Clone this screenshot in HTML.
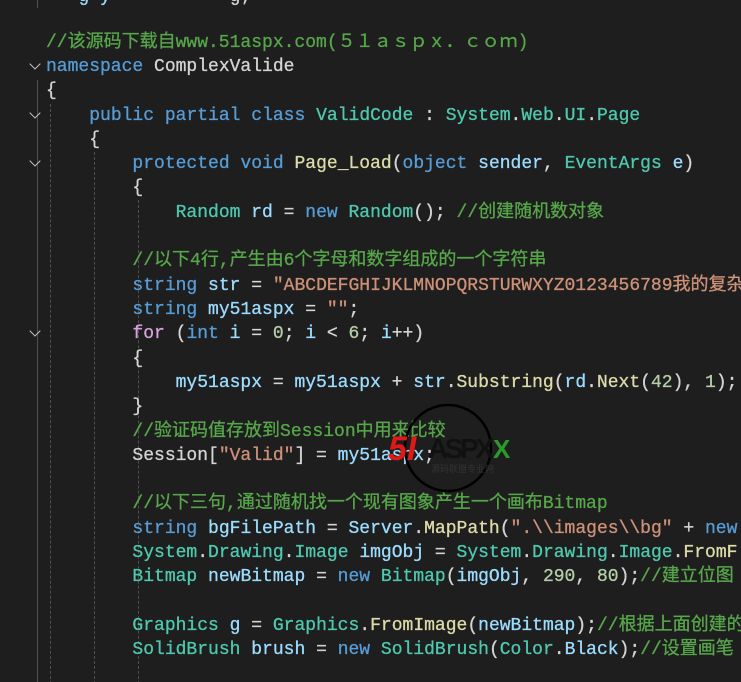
<!DOCTYPE html>
<html><head><meta charset="utf-8"><style>
html,body{margin:0;padding:0;background:#1e1e1e;width:741px;height:682px;overflow:hidden}
.ed{position:relative;width:741px;height:682px;overflow:hidden;font-family:"Liberation Mono","Noto Sans CJK SC",monospace;font-size:18px;color:#d4d4d4}
.l{position:absolute;left:46px;height:24px;line-height:24px;white-space:pre;-webkit-text-stroke:0.3px currentColor}
.k{color:#569cd6}.t{color:#4ec9b0}.m{color:#dcdcaa}.v{color:#9cdcfe}.s{color:#ce9178}.c{color:#57a64a}.n{color:#b5cea8}.p{color:#d8a0df}
.f{position:absolute;left:31px;width:7px;height:7px;border-right:1.5px solid #c5c5c5;border-bottom:1.5px solid #c5c5c5;transform:rotate(45deg)}
.g{position:absolute;width:0;border-left:1px dashed #505050}
.gs{position:absolute;width:0;border-left:1px solid #505050}
</style></head><body><div class="ed">
<div class="l" style="top:-15px;left:46px"><span class="v">   g y</span>           <span>g;</span></div>
<div class="gs" style="left:37px;top:0;height:8px"></div>
<div class="l c" style="top:31px">//该源码下载自www.51aspx.com(５１ａｓｐｘ．ｃｏｍ)</div>
<div class="f" style="top:60px"></div>
<div class="l" style="top:55px"><span class="k">namespace</span> ComplexValide</div>
<div class="l" style="top:79px">{</div>
<div class="gs" style="left:37px;top:80px;height:604px"></div>
<div class="f" style="top:109px"></div>
<div class="l" style="top:104px">    <span class="k">public</span> <span class="k">partial</span> <span class="k">class</span> <span class="t">ValidCode</span> : <span class="t">System</span>.<span class="t">Web</span>.<span class="t">UI</span>.<span class="t">Page</span></div>
<div class="g" style="left:50px;top:104px;height:580px"></div>
<div class="l" style="top:128px">    {</div>
<div class="f" style="top:157px"></div>
<div class="g" style="left:94px;top:152px;height:532px"></div>
<div class="l" style="top:152px">        <span class="k">protected</span> <span class="k">void</span> <span class="m">Page_Load</span>(<span class="k">object</span> <span class="v">sender</span>, <span class="t">EventArgs</span> <span class="v">e</span>)</div>
<div class="l" style="top:176px">        {</div>
<div class="g" style="left:138px;top:200px;height:484px"></div>
<div class="l" style="top:201px">            <span class="t">Random</span> <span class="v">rd</span> = <span class="k">new</span> <span class="t">Random</span>(); <span class="c">//创建随机数对象</span></div>
<div class="l c" style="top:249px">        //以下4行,产生由6个字母和数字组成的一个字符串</div>
<div class="l" style="top:274px">        <span class="k">string</span> <span class="v">str</span> = <span class="s">"ABCDEFGHIJKLMNOPQRSTURWXYZ0123456789我的复杂</span></div>
<div class="l" style="top:298px">        <span class="k">string</span> <span class="v">my51aspx</span> = <span class="s">""</span>;</div>
<div class="f" style="top:327px"></div>
<div class="l" style="top:322px">        <span class="p">for</span> (<span class="k">int</span> <span class="v">i</span> = <span class="n">0</span>; <span class="v">i</span> &lt; <span class="n">6</span>; <span class="v">i</span>++)</div>
<div class="l" style="top:347px">        {</div>
<div class="l" style="top:371px">            <span class="v">my51aspx</span> = <span class="v">my51aspx</span> + <span class="v">str</span>.<span class="m">Substring</span>(<span class="v">rd</span>.<span class="m">Next</span>(<span class="n">42</span>), <span class="n">1</span>);</div>
<div class="l" style="top:395px">        }</div>
<div class="l c" style="top:420px">        //验证码值存放到Session中用来比较</div>
<div class="l" style="top:444px">        Session[<span class="s">"Valid"</span>] = <span class="v">my51aspx</span>;</div>
<div class="l c" style="top:492px">        //以下三句,通过随机找一个现有图象产生一个画布Bitmap</div>
<div class="l" style="top:517px">        <span class="k">string</span> <span class="v">bgFilePath</span> = <span class="v">Server</span>.<span class="m">MapPath</span>(<span class="s">".\\images\\bg"</span> + <span class="k">new</span></div>
<div class="l" style="top:541px">        <span class="t">System</span>.<span class="t">Drawing</span>.<span class="t">Image</span> <span class="v">imgObj</span> = <span class="t">System</span>.<span class="t">Drawing</span>.<span class="t">Image</span>.<span class="m">FromF</span></div>
<div class="l" style="top:565px">        <span class="t">Bitmap</span> <span class="v">newBitmap</span> = <span class="k">new</span> <span class="t">Bitmap</span>(<span class="v">imgObj</span>, <span class="n">290</span>, <span class="n">80</span>);<span class="c">//建立位图</span></div>
<div class="l" style="top:614px">        <span class="t">Graphics</span> <span class="v">g</span> = <span class="t">Graphics</span>.<span class="m">FromImage</span>(<span class="v">newBitmap</span>);<span class="c">//根据上面创建的</span></div>
<div class="l" style="top:638px">        <span class="t">SolidBrush</span> <span class="v">brush</span> = <span class="k">new</span> <span class="t">SolidBrush</span>(<span class="t">Color</span>.<span class="v">Black</span>);<span class="c">//设置画笔</span></div>
<svg style="position:absolute;left:385px;top:402px" width="130" height="100" viewBox="0 0 130 100">
<circle cx="63" cy="46" r="43" fill="none" stroke="#000" stroke-width="2.5"/>
<text x="3" y="58" font-family="Liberation Sans,sans-serif" font-weight="bold" font-style="italic" font-size="34" fill="#e01818">5I</text>
<text x="43" y="56" font-family="Liberation Sans,sans-serif" font-weight="bold" font-size="28" fill="#111" textLength="66">ASPX</text>
<text x="108" y="56" font-family="Liberation Sans,sans-serif" font-weight="bold" font-size="26" fill="#2a9a2a">X</text>
<text x="46" y="70" font-family="Noto Sans CJK SC,sans-serif" font-size="9" fill="#333">源码联盟专业网</text>
</svg>
</div></body></html>
